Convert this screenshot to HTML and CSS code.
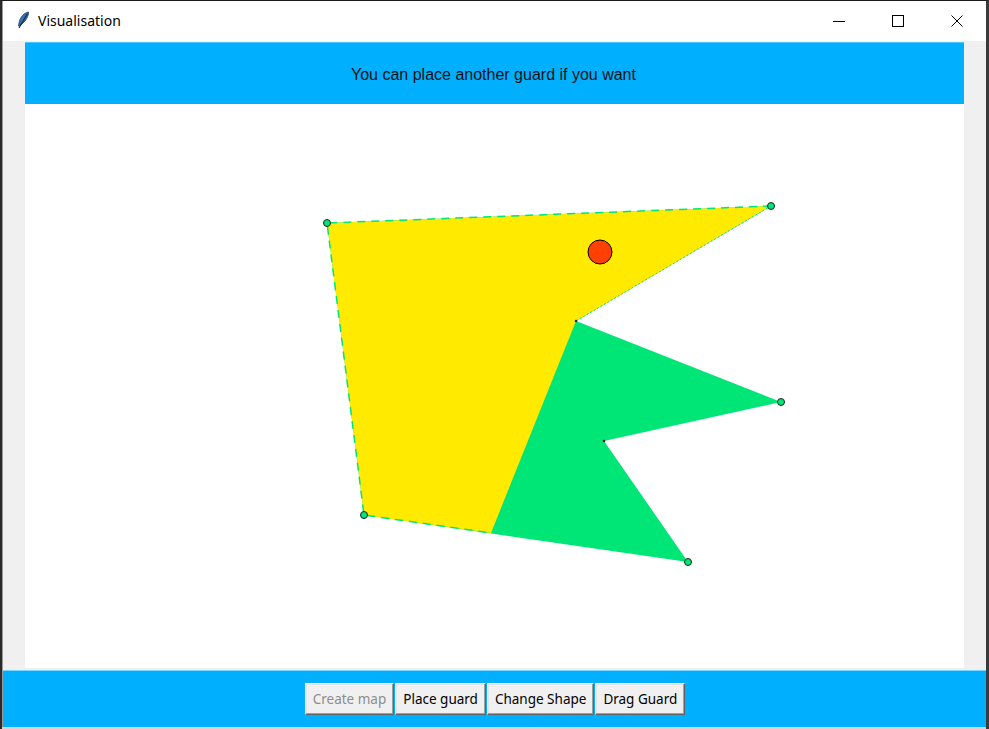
FILE: index.html
```html
<!DOCTYPE html>
<html>
<head>
<meta charset="utf-8">
<title>Visualisation</title>
<link rel="stylesheet" href="styles.css">
</head>
<body>
<div class="window">
  <div class="titlebar">
    <div class="title-left">
      <svg class="feather" width="14" height="20" viewBox="0 0 14 20">
        <path d="M12.5 1 C8 2 4 6 3 12 L2.5 15 C5 14 9 11 11 7 C12 5 12.6 3 12.5 1 Z" fill="#3a6fb5" stroke="#1d3d6e" stroke-width="0.8"/>
        <path d="M11.5 2.5 L3 17" stroke="#1c2b44" stroke-width="1.2"/>
      </svg>
      <span class="title-text">Visualisation</span>
    </div>
    <div class="controls">
      <div class="ctl"><svg width="14" height="14" viewBox="0 0 14 14"><path d="M1 7.5 H13" stroke="#000" stroke-width="1"/></svg></div>
      <div class="ctl"><svg width="14" height="14" viewBox="0 0 14 14"><rect x="1.5" y="1.5" width="11" height="11" fill="none" stroke="#000" stroke-width="1"/></svg></div>
      <div class="ctl"><svg width="14" height="14" viewBox="0 0 14 14"><path d="M1.5 1.5 L12.5 12.5 M12.5 1.5 L1.5 12.5" stroke="#000" stroke-width="1"/></svg></div>
    </div>
  </div>
  <div class="client">
    <div class="inner">
      <div class="message">You can place another guard if you want</div>
      <div class="canvas">
        <svg width="938" height="564" viewBox="0 0 938 564">
          <polygon points="302,119 746,102 551,217 756,298 579,337 663,458 339,411" fill="#00e676"/>
          <polygon points="302,119 746,102 551,217 466,429 339,411" fill="#ffea00"/>
          <polyline points="746,102 302,119 339,411 466,429" fill="none" stroke="#00e676" stroke-width="1.5" stroke-dasharray="8 6"/>
          <line x1="746" y1="102" x2="551" y2="217" stroke="#00e676" stroke-width="1" stroke-dasharray="2 2"/>
          <circle cx="551" cy="217" r="1.3" fill="#222"/>
          <circle cx="579" cy="337" r="1.3" fill="#222"/>
          <circle cx="575" cy="148" r="12" fill="#ff4000" stroke="#000" stroke-width="1"/>
          <circle cx="302" cy="119" r="3.5" fill="#00e676" stroke="#222" stroke-width="1"/>
          <circle cx="746" cy="102" r="3.5" fill="#00e676" stroke="#222" stroke-width="1"/>
          <circle cx="756" cy="298" r="3.5" fill="#00e676" stroke="#222" stroke-width="1"/>
          <circle cx="663" cy="458" r="3.5" fill="#00e676" stroke="#222" stroke-width="1"/>
          <circle cx="339" cy="411" r="3.5" fill="#00e676" stroke="#222" stroke-width="1"/>
        </svg>
      </div>
    </div>
    <div class="toolbar">
      <button class="btn disabled">Create map</button>
      <button class="btn">Place guard</button>
      <button class="btn">Change Shape</button>
      <button class="btn">Drag Guard</button>
    </div>
  </div>
</div>
</body>
</html>
```
FILE: styles.css
```css
html, body {
  margin: 0;
  padding: 0;
}
body {
  width: 989px;
  height: 729px;
  background: #d4d4d4;
  overflow: hidden;
  border-top: 1px solid #1a1a1a;
  box-sizing: border-box;
  border-left: 2px solid #2a2a2a;
  border-right: 3px solid #3a3a3a;
}
.window {
  width: 984px;
  height: 726px;
  display: flex;
  flex-direction: column;
  background: #f0f0f0;
  border-left: 1px solid #9a9a9a;
  box-sizing: border-box;
}
.titlebar {
  height: 40px;
  background: #fff;
  display: flex;
  align-items: center;
  justify-content: space-between;
  flex-shrink: 0;
}
.title-left {
  display: flex;
  align-items: center;
  padding-left: 13px;
  gap: 8px;
}
.feather { display: block; }
.title-text {
  font-family: "Noto Sans", "Open Sans", sans-serif;
  font-size: 14px;
  color: #000;
  position: relative;
  top: -1px;
}
.controls {
  display: flex;
  height: 100%;
}
.ctl {
  width: 59px;
  display: flex;
  align-items: center;
  justify-content: center;
}
.ctl svg { display: block; }
.client {
  flex: 1;
  display: flex;
  flex-direction: column;
  padding-top: 1px;
}
.inner {
  margin: 0 22px 0 22px;
  display: flex;
  flex-direction: column;
}
.message {
  height: 62px;
  background: #00b0ff;
  border-top: 1px solid #4cc8ff;
  box-sizing: border-box;
  display: flex;
  align-items: center;
  justify-content: center;
  font-family: "Liberation Sans", Arial, sans-serif;
  font-size: 16px;
  color: #111;
  padding-top: 3px;
  padding-right: 2px;
}
.canvas {
  height: 564px;
  background: #fff;
}
.canvas svg { display: block; }
.toolbar {
  margin-top: 2px;
  height: 57px;
  background: #00b0ff;
  border-top: 1px solid #7fd4ff;
  box-sizing: border-box;
  display: flex;
  justify-content: center;
  align-items: flex-start;
  padding-top: 12px;
  padding-left: 2px;
}
.btn {
  height: 32px;
  margin: 0 1px 0 0;
  padding: 0 7px;
  background: #f0f0f0;
  font-family: "Noto Sans", "Open Sans", sans-serif;
  font-size: 13.5px;
  color: #000;
  border: 1px solid;
  border-color: #fff #646464 #646464 #fff;
  box-shadow: inset -1px -1px 0 #a0a0a0, inset 1px 1px 0 #e3e3e3;
  border-radius: 0;
  cursor: default;
}
.btn.disabled {
  color: #8d8d8d;
}
```
